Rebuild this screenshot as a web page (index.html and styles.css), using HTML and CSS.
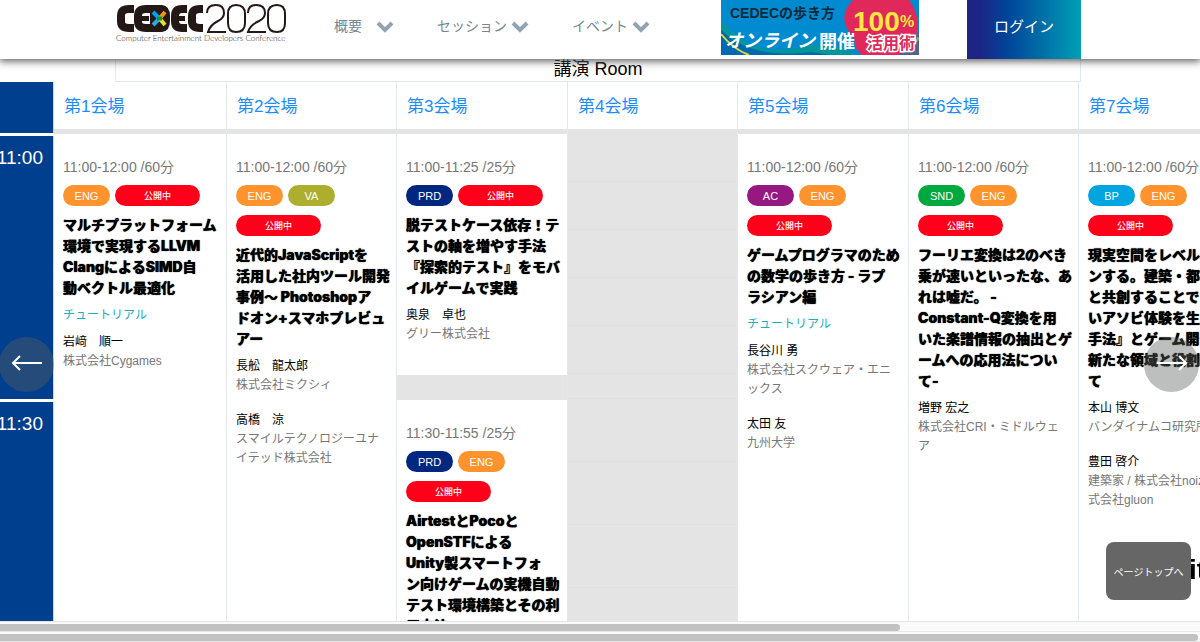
FILE: index.html
```
<!DOCTYPE html>
<html lang="ja">
<head>
<meta charset="utf-8">
<title>CEDEC2020</title>
<link rel="stylesheet" href="styles.css">
</head>
<body>

<header class="header">
	<a class="logo" href="#" aria-label="CEDEC2020">
		<svg width="172" height="42" viewBox="0 0 172 42">
			<g fill="none" stroke="#231815" stroke-width="8">
				<path d="M18 5H13Q5 5 5 12V17Q5 24 13 24H18"/>
				<path d="M35 5H30Q22 5 22 12V17Q22 24 30 24H35"/>
				<path d="M71 5H66Q59 5 59 12V17Q59 24 66 24H71"/>
				<path d="M87 5H84Q76 5 76 12V17Q76 24 84 24H87"/>
				<path d="M22 14.500H33M59 14.500H69" stroke-width="5"/>
			</g>
			<path d="M34 1H46Q54 2 54 12V17Q54 27 46 28H34Z" fill="#231815"/>
			<g fill="none" stroke-width="4">
				<path d="M37 8L43 14" stroke="#00a0e9"/>
				<path d="M49 8L44 14" stroke="#f39800"/>
				<path d="M37 21L43 15" stroke="#2ea7e0"/>
				<path d="M49 21L44 15" stroke="#e6df2b"/>
				<path d="M41 14.500H46" stroke="#009944"/>
			</g>
			<g fill="none" stroke="#231815" stroke-width="2">
				<path d="M91 9Q91 1 100 1Q108 1 108 9Q108 14 102 17Q94 21 92 28H110"/>
				<path d="M112 10Q112 1 120 1Q129 1 129 10V19Q129 28 120 28Q112 28 112 19Z"/>
				<path d="M132 9Q132 1 140 1Q149 1 149 9Q149 14 143 17Q134 21 132 28H150"/>
				<path d="M152 10Q152 1 161 1Q169 1 169 10V19Q169 28 161 28Q152 28 152 19Z"/>
			</g>
			<text class="logo_sub" x="0" y="37">Computer Entertainment Developers Conference</text>
		</svg>
	</a>
	<nav class="nav">
		<a href="#">概要<svg class="chevron" width="18" height="12" viewBox="0 0 18 12"><path d="M2 2L9 9L16 2"/></svg></a>
		<a href="#">セッション<svg class="chevron" width="18" height="12" viewBox="0 0 18 12"><path d="M2 2L9 9L16 2"/></svg></a>
		<a href="#">イベント<svg class="chevron" width="18" height="12" viewBox="0 0 18 12"><path d="M2 2L9 9L16 2"/></svg></a>
	</nav>
	<a class="banner" href="#">
		<svg width="198" height="55" viewBox="0 0 198 55">
			<rect width="198" height="55" fill="#008bd0"/>
			<path d="M0 20Q30 58 75 48Q110 40 135 55H0Z" fill="#00969a"/>
			<path d="M0 30Q30 60 90 52L110 55H0Z" fill="#0068b0"/>
			<path d="M0 34Q12 49 28 55" fill="none" stroke="#d7dc3c" stroke-width="2"/>
			<path d="M198 32L172 55H198Z" fill="#55618d"/>
			<path d="M198 38Q186 50 172 54" fill="none" stroke="#5fb878" stroke-width="3"/>
			<path d="M132 0H188Q204 22 191 44Q186 52 176 55H142Q134 52 133 38Q114 18 132 0Z" fill="#e0285a"/>
			<text class="banner_top" x="9" y="18">CEDECの歩き方</text>
			<text class="banner_online" x="4" y="47">オンライン</text>
			<text class="banner_open" x="98" y="48">開催</text>
			<text class="banner_num" x="132" y="31">100</text>
			<text class="banner_per" x="179" y="27">%</text>
			<text class="banner_use" x="146" y="49">活用術</text>
		</svg>
	</a>
	<a class="login" href="#">ログイン</a>
</header>

<main class="schedule">
	<div class="room_title">講演 Room</div>
	<div class="timetable">
		<div class="times">
			<div class="time time_head"></div>
			<div class="time"><span>11:00</span></div>
			<div class="time"><span>11:30</span></div>
		</div>
		<section class="room">
			<h2><a href="#">第1会場</a></h2>
			<article class="session">
				<p class="hours">11:00-12:00 /60分</p>
				<div class="tags"><span class="tag eng">ENG</span><span class="tag open">公開中</span></div>
				<h3>マルチプラットフォーム<br>環境で実現するLLVM<br>ClangによるSIMD自<br>動ベクトル最適化</h3>
				<p class="kind">チュートリアル</p>
				<p class="speaker">岩﨑　順一</p>
				<p class="company">株式会社Cygames</p>
			</article>
		</section>
		<section class="room">
			<h2><a href="#">第2会場</a></h2>
			<article class="session">
				<p class="hours">11:00-12:00 /60分</p>
				<div class="tags"><span class="tag eng">ENG</span><span class="tag va">VA</span><span class="tag open">公開中</span></div>
				<h3>近代的JavaScriptを<br>活用した社内ツール開発<br>事例〜 Photoshopア<br>ドオン+スマホプレビュ<br>アー</h3>
				<p class="speaker">長舩　龍太郎</p>
				<p class="company">株式会社ミクシィ</p>
				<p class="speaker">高橋　涼</p>
				<p class="company">スマイルテクノロジーユナ<br>イテッド株式会社</p>
			</article>
		</section>
		<section class="room">
			<h2><a href="#">第3会場</a></h2>
			<article class="session session_short">
				<p class="hours">11:00-11:25 /25分</p>
				<div class="tags"><span class="tag prd">PRD</span><span class="tag open">公開中</span></div>
				<h3>脱テストケース依存！テ<br>ストの軸を増やす手法<br>『探索的テスト』をモバ<br>イルゲームで実践</h3>
				<p class="speaker">奥泉　卓也</p>
				<p class="company">グリー株式会社</p>
			</article>
			<div class="break"></div>
			<article class="session">
				<p class="hours">11:30-11:55 /25分</p>
				<div class="tags"><span class="tag prd">PRD</span><span class="tag eng">ENG</span><span class="tag open">公開中</span></div>
				<h3>AirtestとPocoと<br>OpenSTFによる<br>Unity製スマートフォ<br>ン向けゲームの実機自動<br>テスト環境構築とその利<br>用方法</h3>
			</article>
		</section>
		<section class="room room_empty">
			<h2><a href="#">第4会場</a></h2>
			<div class="empty">
				<div></div><div></div><div></div><div></div><div></div>
				<div class="gap"></div><div></div><div></div><div></div>
			</div>
		</section>
		<section class="room">
			<h2><a href="#">第5会場</a></h2>
			<article class="session">
				<p class="hours">11:00-12:00 /60分</p>
				<div class="tags"><span class="tag ac">AC</span><span class="tag eng">ENG</span><span class="tag open">公開中</span></div>
				<h3>ゲームプログラマのため<br>の数学の歩き方 - ラプ<br>ラシアン編</h3>
				<p class="kind">チュートリアル</p>
				<p class="speaker">長谷川 勇</p>
				<p class="company">株式会社スクウェア・エニ<br>ックス</p>
				<p class="speaker">太田 友</p>
				<p class="company">九州大学</p>
			</article>
		</section>
		<section class="room">
			<h2><a href="#">第6会場</a></h2>
			<article class="session">
				<p class="hours">11:00-12:00 /60分</p>
				<div class="tags"><span class="tag snd">SND</span><span class="tag eng">ENG</span><span class="tag open">公開中</span></div>
				<h3>フーリエ変換は2のべき<br>乗が速いといったな、あ<br>れは嘘だ。 -<br>Constant-Q変換を用<br>いた楽譜情報の抽出とゲ<br>ームへの応用法につい<br>て-</h3>
				<p class="speaker">増野 宏之</p>
				<p class="company">株式会社CRI・ミドルウェ<br>ア</p>
			</article>
		</section>
		<section class="room">
			<h2><a href="#">第7会場</a></h2>
			<article class="session">
				<p class="hours">11:00-12:00 /60分</p>
				<div class="tags"><span class="tag bp">BP</span><span class="tag eng">ENG</span><span class="tag open">公開中</span></div>
				<h3>現実空間をレベルデザイ<br>ンする。建築・都市<br>と共創することで『新し<br>いアソビ体験を生み出す<br>手法』とゲーム開発者の<br>新たな領域と役割につい<br>て</h3>
				<p class="speaker">本山 博文</p>
				<p class="company">バンダイナムコ研究所</p>
				<p class="speaker">豊田 啓介</p>
				<p class="company">建築家 / 株式会社noiz<br>式会社gluon</p>
			</article>
		</section>
	</div>
	<div class="scrollbar"><div class="thumb thumb_inner"></div></div>
	<div class="scrollbar"><div class="thumb"></div></div>
</main>

<button class="arrow arrow_prev" type="button" aria-label="前へ"><svg width="32" height="16" viewBox="0 0 32 16"><path d="M31 8H2M9 1L2 8L9 15"/></svg></button>
<button class="arrow arrow_next" type="button" aria-label="次へ"><svg width="32" height="16" viewBox="0 0 32 16"><path d="M1 8H30M23 1L30 8L23 15"/></svg></button>
<div class="watermark">it</div>
<button class="pagetop" type="button">ページトップへ</button>

</body>
</html>
```
FILE: styles.css
```
* {
	box-sizing: border-box;
}
body {
	margin: 0;
	background: #fff;
	color: #000;
	font: 12px/19px "Liberation Sans", "Noto Sans CJK JP", sans-serif;
	overflow: hidden;
}
a {
	text-decoration: none;
}
h2, h3, p {
	margin: 0;
}

/* header */
.header {
	position: relative;
	z-index: 10;
	display: flex;
	height: 59px;
	padding: 0 119px 0 116px;
	background: #fff;
	box-shadow: 0 1px 8px 1px #555;
}
.logo {
	width: 172px;
	margin-right: 46px;
	padding-top: 4px;
}
.logo_sub {
	font: 300 8px Lato, sans-serif;
	fill: #231815;
}
.nav {
	display: flex;
	gap: 43px;
	height: 53px;
	align-items: center;
}
.nav a {
	display: flex;
	align-items: center;
	color: #778791;
	font-size: 14px;
}
.nav a:first-child .chevron {
	margin-left: 14px;
}
.chevron {
	margin-left: 4px;
}
.chevron path {
	fill: none;
	stroke: #90a4b1;
	stroke-width: 4;
}
.banner {
	height: 55px;
	margin-left: auto;
	margin-right: 48px;
}
.banner svg {
	display: block;
}
.banner text {
	font-family: "Liberation Sans", "Noto Sans CJK JP", sans-serif;
	font-weight: bold;
}
.banner .banner_top {
	font-size: 14px;
	fill: #072a3a;
}
.banner .banner_online {
	font-size: 18px;
	font-style: italic;
	fill: #fff;
}
.banner .banner_open {
	font-size: 18px;
	fill: #fff;
}
.banner .banner_num {
	font-size: 28px;
	fill: #ffe840;
}
.banner .banner_per {
	font-size: 16px;
	fill: #ffe840;
}
.banner .banner_use {
	font-size: 16px;
	fill: #e0285a;
	stroke: #fff;
	stroke-width: 3;
	paint-order: stroke;
}
.login {
	width: 114px;
	background: linear-gradient(to right, #1d2483 10%, #00449a 35%, #009fb5);
	color: #fff;
	font-size: 15px;
	line-height: 54px;
	text-align: center;
}

/* timetable */
.room_title {
	height: 23px;
	margin: 0 119px 0 115px;
	border: 1px solid #e3e8ec;
	border-top: 0;
	font-size: 18px;
	line-height: 20px;
	text-align: center;
}
.timetable {
	display: grid;
	grid-template-columns: 54px 173px repeat(3, 170px 171px);
	height: 540px;
	overflow: hidden;
	border-bottom: 1px solid #e3e3e3;
}
.times {
	display: flex;
	flex-direction: column;
	gap: 3px;
}
.time {
	display: flex;
	flex-shrink: 0;
	justify-content: flex-end;
	height: 263px;
	padding: 11px 10px 0 0;
	background: #003e8e;
	border-right: 1px solid #ccd8e8;
	color: #fff;
	font-size: 19px;
	line-height: 22px;
}
.time_head {
	height: 51px;
}
.room {
	border-right: 1px solid #e3e8ec;
}
.room h2 {
	height: 52px;
	padding-left: 10px;
	border-bottom: 5px solid #e4e4e4;
	font-size: 17px;
	font-weight: normal;
	line-height: 49px;
}
.room h2 a {
	color: #1a8cff;
}
.session {
	padding: 23px 0 0 9px;
	white-space: nowrap;
}
.session_short {
	height: 241px;
}
.break {
	height: 25px;
	background: #e4e4e4;
}
.hours {
	color: #777;
	font-size: 14px;
	line-height: 20px;
}
.tags {
	display: flex;
	flex-wrap: wrap;
	gap: 9px 5px;
	padding: 8px 0;
}
.tag {
	width: 47px;
	height: 21px;
	border-radius: 11px;
	color: #fff;
	font-size: 11px;
	line-height: 23px;
	text-align: center;
}
.eng { background: #ff932e; }
.va { background: #adad2e; }
.prd { background: #00277f; }
.ac { background: #951981; }
.snd { background: #00a840; }
.bp { background: #00a5df; }
.open {
	width: 85px;
	background: #ff001b;
	font-size: 9px;
	font-weight: 500;
}
.session h3 {
	font: 900 14px/21px Inter, "Noto Sans CJK JP", sans-serif;
	text-shadow: 0 0 1px #000;
}
.kind {
	padding-top: 8px;
	color: #18afc0;
}
.speaker {
	padding-top: 8px;
}
.company {
	color: #777;
}
.company + .speaker {
	padding-top: 16px;
}
.room_empty {
	display: flex;
	flex-direction: column;
}
.empty {
	flex: 1;
	background: #e4e4e4;
}
.empty div {
	height: 48px;
	border-bottom: 1px solid #dce0e3;
}
.empty div:nth-child(n+6) {
	height: 63px;
}
.empty div.gap {
	height: 25px;
}

/* scrollbars */
.scrollbar {
	height: 10px;
	padding-top: 2px;
	background: #fafafa;
	border-bottom: 1px solid #e8e8e8;
}
.thumb {
	height: 7px;
	margin-right: 2px;
	border-radius: 0 4px 4px 0;
	background: #c1c1c1;
}
.thumb_inner {
	width: 75%;
}

/* floating controls */
.arrow {
	position: fixed;
	z-index: 5;
	top: 337px;
	width: 55px;
	height: 55px;
	padding: 0;
	border: 0;
	border-radius: 50%;
	background: rgba(90, 94, 92, .4);
}
.arrow_prev {
	left: -1px;
}
.arrow_next {
	right: 1px;
}
.arrow path {
	fill: none;
	stroke: #fff;
	stroke-width: 2;
}
.pagetop {
	position: fixed;
	z-index: 6;
	right: 9px;
	bottom: 42px;
	width: 85px;
	height: 58px;
	padding: 0;
	border: 0;
	border-radius: 8px;
	background: #666;
	color: #fff;
	font: 10px "Noto Sans CJK JP", sans-serif;
}
.watermark {
	position: fixed;
	right: -6px;
	bottom: 52px;
	font: bold 28px/40px "Liberation Sans", sans-serif;
}
```
